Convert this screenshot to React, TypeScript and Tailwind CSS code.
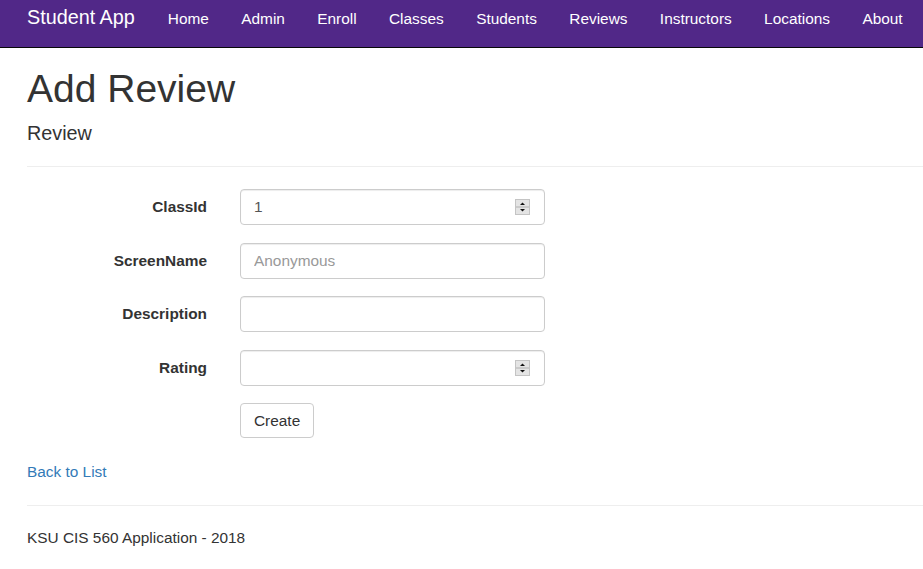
import React from 'react';

const navLinks = [
  'Home',
  'Admin',
  'Enroll',
  'Classes',
  'Students',
  'Reviews',
  'Instructors',
  'Locations',
  'About',
];

function Spinner() {
  return (
    <svg width="15" height="16" viewBox="0 0 15 16" className="shrink-0">
      <rect x="0.5" y="0.5" width="14" height="15" fill="#e4e4e4" stroke="#c4c4c4" />
      <line x1="1" y1="8" x2="14" y2="8" stroke="#b0b0b0" />
      <polygon points="5,6 10,6 7.5,3.5" fill="#111" />
      <polygon points="5,10 10,10 7.5,12.5" fill="#111" />
    </svg>
  );
}

function Field({
  label,
  value,
  placeholder,
  spinner,
}: {
  label: string;
  value?: string;
  placeholder?: string;
  spinner?: boolean;
}) {
  return (
    <div className="mb-[17.5px] flex h-[36px] items-center gap-[33px]">
      <label className="w-[180px] text-right text-[15.4px] font-bold leading-[22px] text-[#333]">
        {label}
      </label>
      <div className="flex h-[36px] w-[305px] items-center rounded-[4px] border border-[#ccc] bg-white pl-[13px] pr-[14px] shadow-[inset_0_1px_1px_rgba(0,0,0,0.075)]">
        <input
          type="text"
          readOnly
          defaultValue={value}
          placeholder={placeholder}
          className="min-w-0 flex-1 bg-transparent text-[15.4px] leading-[22px] text-[#555] outline-none placeholder:text-[#999]"
        />
        {spinner ? <Spinner /> : null}
      </div>
    </div>
  );
}

export default function App() {
  return (
    <div className="min-h-[569px] bg-white font-['Liberation_Sans',Arial,sans-serif] text-[15.4px] leading-[22px] text-[#333]">
      <nav className="flex h-[48px] items-baseline gap-[32.4px] border-b border-[#080808] bg-[#512888] pl-[27px] pt-[6px]">
        <a className="mr-[0.6px] text-[19.8px] leading-[22px] text-white">Student App</a>
        {navLinks.map((link) => (
          <a key={link} className="text-[15.4px] leading-[22px] whitespace-nowrap text-white">
            {link}
          </a>
        ))}
      </nav>

      <main className="pl-[27px]">
        <h1 className="mt-[19px] text-[39px] leading-[43.6px] font-normal">Add Review</h1>
        <h4 className="mt-[12px] text-[19.8px] leading-[21.8px] font-normal">Review</h4>
        <hr className="mt-[22px] border-t border-[#eee]" />

        <form className="mt-[22px]">
          <Field label="ClassId" value="1" spinner />
          <Field label="ScreenName" placeholder="Anonymous" />
          <Field label="Description" />
          <Field label="Rating" spinner />
          <div className="pl-[213px]">
            <button
              type="button"
              className="h-[35px] rounded-[4px] border border-[#ccc] bg-white px-[13px] text-[15.4px] leading-[22px] text-[#333]"
            >
              Create
            </button>
          </div>
        </form>

        <div className="mt-[23px]">
          <a className="text-[#337ab7]">Back to List</a>
        </div>
        <hr className="mt-[22px] border-t border-[#eee]" />
        <footer className="mt-[21px]">
          <p>KSU CIS 560 Application - 2018</p>
        </footer>
      </main>
    </div>
  );
}
